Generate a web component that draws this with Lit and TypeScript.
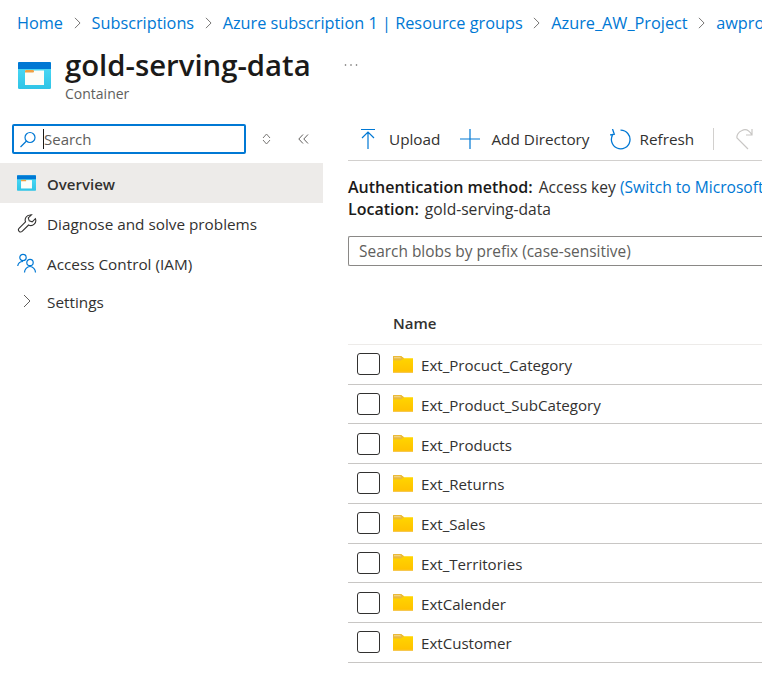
import { LitElement, html, css, svg } from 'lit';
import { customElement } from 'lit/decorators.js';

const crumbs = ['Home', 'Subscriptions', 'Azure subscription 1 | Resource groups', 'Azure_AW_Project', 'awpro'];
const folders = [
  'Ext_Procuct_Category',
  'Ext_Product_SubCategory',
  'Ext_Products',
  'Ext_Returns',
  'Ext_Sales',
  'Ext_Territories',
  'ExtCalender',
  'ExtCustomer',
];

const containerIcon = (w: number, h: number) => html`
  <svg width=${w} height=${h} viewBox="0 0 33 27">
    <defs>
      <linearGradient id="cbody" x1="0" y1="0" x2="0" y2="1">
        <stop offset="0" stop-color="#50dcf8"></stop>
        <stop offset="1" stop-color="#2fc4e6"></stop>
      </linearGradient>
    </defs>
    <rect y="0" width="33" height="27" rx="1.2" fill="url(#cbody)"></rect>
    <path d="M0 7V1.2A1.2 1.2 0 0 1 1.2 0h30.6A1.2 1.2 0 0 1 33 1.2V7z" fill="#0078d4"></path>
    <rect x="7" y="8.5" width="19" height="14.5" fill="#fdfdf8"></rect>
    <path d="M7 10.5V9.2A1.2 1.2 0 0 1 8.2 8h6.6a1.2 1.2 0 0 1 1.2 1.2v.3a1 1 0 0 1-1 1z" fill="#f0a040"></path>
  </svg>
`;

const folderIcon = svg`
  <defs>
    <linearGradient id="fbody" x1="0" y1="0" x2="0" y2="1">
      <stop offset="0" stop-color="#ffd800"></stop>
      <stop offset="1" stop-color="#ffc000"></stop>
    </linearGradient>
  </defs>
  <path d="M0 .8A.8.8 0 0 1 .8 0H8l3 2.200h9V17H0z" fill="url(#fbody)"></path>
  <path d="M0 .8A.8.8 0 0 1 .8 0H8l3 2.200L8 4.500H0z" fill="#eab93a"></path>
  <path d="M1 1.300h6l1.300 1H1z" fill="#f3dc9a"></path>
  <path d="M0 15.800h20V17H0z" fill="#f7c84e"></path>
`;

@customElement('app-root')
export class AppRoot extends LitElement {
  static styles = css`
    :host {
      display: block;
      width: 762px;
      height: 692px;
      overflow: hidden;
      background: #fff;
      color: #323130;
      font-family: 'Open Sans', 'Noto Sans', sans-serif;
      font-size: 15.300px;
    }
    svg {
      display: block;
      flex: none;
    }
    .crumbs {
      display: flex;
      align-items: center;
      box-sizing: border-box;
      height: 46px;
      padding: 0 0 1px 17px;
      white-space: nowrap;
      font-size: 16.300px;
      color: #0078d4;
    }
    .crumbs svg {
      margin: 0 11px 0 10.500px;
    }
    .head {
      display: flex;
      height: 62px;
      padding-left: 18px;
    }
    .head .icon {
      margin: 16px 14px 0 0;
    }
    .title {
      display: flex;
      flex-direction: column;
    }
    h1 {
      margin: 0;
      font-size: 29.300px;
      font-weight: 600;
      line-height: 38px;
      color: #1b1a19;
    }
    .sub {
      font-size: 14px;
      line-height: 20px;
      color: #605e5c;
    }
    .more {
      margin: 17px 0 0 33px;
    }
    .body {
      display: grid;
      grid-template-columns: 323px 1fr;
    }
    .side {
      padding-top: 16px;
    }
    .side-search {
      display: flex;
      align-items: center;
      height: 30px;
      padding-left: 12px;
    }
    .search {
      display: flex;
      align-items: center;
      box-sizing: border-box;
      width: 234px;
      height: 30px;
      border: 2px solid #0078d4;
      border-radius: 2px;
      padding-left: 6px;
      font-size: 15px;
      color: #605e5c;
    }
    .search span {
      margin-left: 7px;
      border-left: 1px solid #1b1a19;
      line-height: 20px;
    }
    .spin {
      margin-left: 16px;
    }
    .collapse {
      margin-left: 27px;
    }
    nav {
      margin-top: 9px;
    }
    .item {
      display: flex;
      align-items: center;
      height: 40px;
      padding-left: 17px;
      gap: 10px;
    }
    .item span {
      padding-top: 2px;
    }
    .item.on {
      background: #edebe9;
      font-weight: 600;
      font-size: 15px;
      gap: 11px;
      color: #323130;
    }
    .item.settings {
      height: 36px;
    }
    .chev {
      display: flex;
      justify-content: center;
      width: 20px;
    }
    .main {
      min-width: 0;
      padding-left: 25px;
      white-space: nowrap;
    }
    .bar {
      display: flex;
      align-items: center;
      height: 30px;
      padding: 0 0 6px 13px;
      border-bottom: 1px solid #d2d0ce;
      margin-top: 16px;
    }
    .btn {
      display: flex;
      align-items: center;
    }
    .btn + .btn {
      margin-left: 20px;
    }
    .upload {
      margin-right: 14px;
    }
    .add {
      margin-right: 11px;
    }
    .refresh {
      margin-right: 9px;
    }
    .sep {
      width: 1px;
      height: 22px;
      background: #d2d0ce;
      margin: 0 22px 0 19px;
    }
    .info {
      margin-top: 15px;
      line-height: 22px;
      font-size: 15.600px;
    }
    .info b {
      font-size: 16px;
      font-weight: 600;
      color: #1b1a19;
      margin-right: 2px;
    }
    .info a {
      color: #0078d4;
    }
    .filter {
      display: flex;
      align-items: center;
      box-sizing: border-box;
      height: 30px;
      margin-top: 16px;
      padding-left: 10px;
      border: 1px solid #8a8886;
      border-right: 0;
      border-radius: 2px 0 0 2px;
      font-size: 15.450px;
      color: #605e5c;
    }
    .name {
      display: flex;
      align-items: center;
      box-sizing: border-box;
      height: 78.750px;
      padding: 36px 0 0 45px;
      font-size: 15px;
      font-weight: 600;
      border-bottom: 1px solid #edebe9;
    }
    .row {
      display: flex;
      align-items: center;
      box-sizing: border-box;
      height: 39.750px;
      padding-left: 9px;
      border-bottom: 1px solid #c8c6c4;
      font-size: 15.100px;
    }
    .row span {
      padding-top: 2px;
    }
    .check {
      box-sizing: border-box;
      width: 23px;
      height: 22px;
      border: 1px solid #323130;
      border-radius: 3px;
      margin-right: 13px;
    }
    .row svg {
      margin-right: 8px;
    }
  `;

  private chevron(w: number, h: number, stroke: string) {
    return html`<svg width=${w} height=${h} viewBox="0 0 8 14">
      <path d="M1 1l6 6-6 6" fill="none" stroke=${stroke} stroke-width="1"></path>
    </svg>`;
  }

  render() {
    return html`
      <div class="crumbs">
        ${crumbs.map(
          (c, i) => html`${i > 0 ? this.chevron(7, 12, '#605e5c') : ''}<span>${c}</span>`,
        )}
      </div>
      <div class="head">
        <div class="icon">${containerIcon(33, 27)}</div>
        <div class="title">
          <h1>gold-serving-data</h1>
          <div class="sub">Container</div>
        </div>
        <svg class="more" width="14" height="4" viewBox="0 0 14 4">
          <circle cx="1.500" cy="2" r="0.800" fill="#605e5c"></circle>
          <circle cx="7" cy="2" r="0.800" fill="#605e5c"></circle>
          <circle cx="12.500" cy="2" r="0.800" fill="#605e5c"></circle>
        </svg>
      </div>
      <div class="body">
        <aside class="side">
          <div class="side-search">
            <div class="search">
              <svg width="16" height="17" viewBox="0 0 16 17">
                <circle cx="10" cy="6.500" r="5" fill="none" stroke="#0078d4" stroke-width="1.200"></circle>
                <path d="M6.500 10L.5 16" stroke="#0078d4" stroke-width="1.200"></path>
              </svg>
              <span>Search</span>
            </div>
            <svg class="spin" width="9" height="12" viewBox="0 0 9 12">
              <path d="M1 5l3.500-4L8 5M1 7l3.500 4L8 7" fill="none" stroke="#797775" stroke-width="1"></path>
            </svg>
            <svg class="collapse" width="11" height="10" viewBox="0 0 11 10">
              <path d="M5 .5L.8 5 5 9.500M10 .5L5.800 5 10 9.500" fill="none" stroke="#605e5c" stroke-width="1"></path>
            </svg>
          </div>
          <nav>
            <div class="item on">${containerIcon(19, 16)}<span>Overview</span></div>
            <div class="item">
              <svg width="20" height="19" viewBox="0 0 19 19">
                <path d="M12.500 1A5 5 0 0 0 8 7.800L1.500 14.300a2.200 2.200 0 0 0 3.100 3.100L11.100 11a5 5 0 0 0 6.800-6.400l-3.200 3.200-3-.9-.9-3L14 .8a5 5 0 0 0-1.500.200z" fill="none" stroke="#323130" stroke-width="1.100"></path>
              </svg>
              <span>Diagnose and solve problems</span>
            </div>
            <div class="item">
              <svg width="20" height="20" viewBox="0 0 20 20">
                <circle cx="6" cy="4.500" r="3.200" fill="none" stroke="#0078d4" stroke-width="1.200"></circle>
                <circle cx="13" cy="9.500" r="3.200" fill="none" stroke="#0078d4" stroke-width="1.200"></circle>
                <path d="M.7 13a5.500 5.500 0 0 1 5.300-4.500M7.500 19.500c0-3.200 2.500-6 5.500-6s5.500 2.800 5.500 6" fill="none" stroke="#0078d4" stroke-width="1.200"></path>
              </svg>
              <span>Access Control (IAM)</span>
            </div>
            <div class="item settings">
              <div class="chev">${this.chevron(8, 14, '#605e5c')}</div>
              <span>Settings</span>
            </div>
          </nav>
        </aside>
        <main class="main">
          <div class="bar">
            <div class="btn">
              <svg class="upload" width="14" height="20" viewBox="0 0 14 20">
                <path d="M0 .5h14M7 20V3M1 9l6-6 6 6" fill="none" stroke="#0078d4" stroke-width="1.200"></path>
              </svg>
              Upload
            </div>
            <div class="btn">
              <svg class="add" width="20" height="20" viewBox="0 0 20 20">
                <path d="M10 0v20M0 10h20" fill="none" stroke="#0078d4" stroke-width="1.200"></path>
              </svg>
              Add Directory
            </div>
            <div class="btn">
              <svg class="refresh" width="21" height="21" viewBox="0 0 21 21">
                <path d="M10.500 1.200A9.300 9.300 0 1 1 3.200 5M2.500 0l1.800 5.300-4.300.5" fill="none" stroke="#0078d4" stroke-width="1.300"></path>
              </svg>
              Refresh
            </div>
            <div class="sep"></div>
            <svg width="17" height="22" viewBox="0 0 17 22">
              <path d="M16 1v6h-6M16 7C13 2 9 1 6 2.500 2 4 .5 8 1 10L12 21" fill="none" stroke="#c8c6c4" stroke-width="1.200"></path>
            </svg>
          </div>
          <div class="info">
            <div><b>Authentication method:</b> Access key <a>(Switch to Microsoft</a></div>
            <div><b>Location:</b> gold-serving-data</div>
          </div>
          <div class="filter">Search blobs by prefix (case-sensitive)</div>
          <div class="name">Name</div>
          ${folders.map(
            (f) => html`
              <div class="row">
                <div class="check"></div>
                <svg width="20" height="17" viewBox="0 0 20 17">${folderIcon}</svg>
                <span>${f}</span>
              </div>
            `,
          )}
        </main>
      </div>
    `;
  }
}
